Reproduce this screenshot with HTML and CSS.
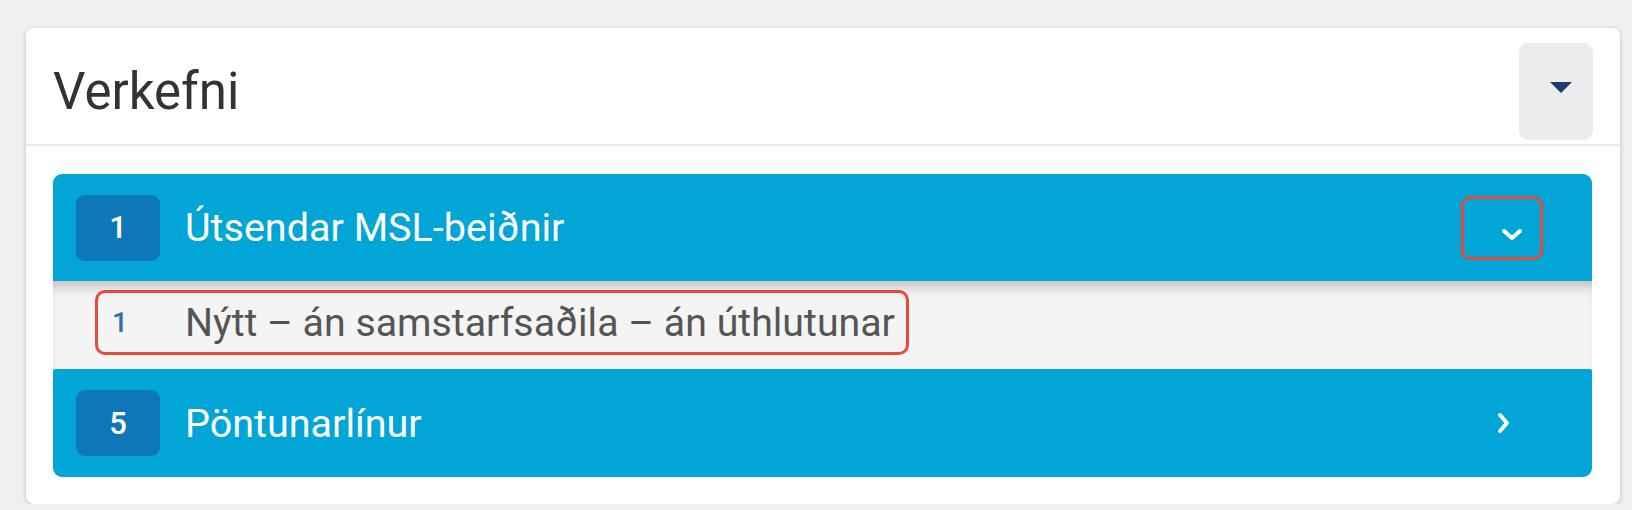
FILE: index.html
```html
<!DOCTYPE html>
<html lang="is">
<head>
<meta charset="utf-8">
<title>Verkefni</title>
<link rel="stylesheet" href="styles.css">
</head>
<body>
  <section class="card">
    <header class="card-header">
      <h2 class="card-title">Verkefni</h2>
      <button class="menu-btn" type="button" aria-label="Valmynd"><span class="caret"></span></button>
    </header>
    <div class="card-body">
      <div class="group">
        <div class="bar bar-first">
          <span class="badge">1</span>
          <span class="bar-label">Útsendar MSL-beiðnir</span>
          <span class="toggle toggle-open">
            <svg width="22" height="13" viewBox="0 0 22 13"><path d="M3 3 L11 10 L19 3" fill="none" stroke="#fff" stroke-width="4" stroke-linecap="round" stroke-linejoin="round"/></svg>
          </span>
        </div>
        <div class="sub-row">
          <div class="sub-item">
            <span class="sub-num">1</span>
            <span class="sub-label">Nýtt – án samstarfsaðila – án úthlutunar</span>
          </div>
        </div>
        <div class="bar bar-last">
          <span class="badge">5</span>
          <span class="bar-label">Pöntunarlínur</span>
          <span class="toggle toggle-closed">
            <svg width="14" height="22" viewBox="0 0 14 22"><path d="M3 3 L10 11 L3 19" fill="none" stroke="#fff" stroke-width="4" stroke-linecap="round" stroke-linejoin="round"/></svg>
          </span>
        </div>
      </div>
    </div>
  </section>
</body>
</html>
```
FILE: styles.css
```css
* { box-sizing: border-box; }

body {
  margin: 0;
  padding: 28px 12px 0 26px;
  background: #f0f0f0;
  font-family: Roboto, "Liberation Sans", Arial, sans-serif;
}

.card {
  width: 1594px;
  height: 476px;
  background: #fff;
  border-radius: 8px;
  box-shadow: 0 1px 4px rgba(0, 0, 0, 0.22);
}

.card-header {
  display: flex;
  align-items: center;
  justify-content: space-between;
  padding: 15px 27px 4px 27px;
  border-bottom: 2px solid #e9e9e9;
}

.card-title {
  margin: 0;
  font-size: 51px;
  font-weight: 400;
  color: #333;
  line-height: 1;
}

.menu-btn {
  width: 74px;
  height: 97px;
  border: 0;
  border-radius: 9px;
  background: #ececec;
  display: flex;
  align-items: center;
  justify-content: center;
  padding: 0 0 8px 10px;
}

.caret {
  width: 0;
  height: 0;
  border-left: 11px solid transparent;
  border-right: 11px solid transparent;
  border-top: 11px solid #1d3a72;
}

.card-body {
  padding: 28px 28px 26px 27px;
}

.bar {
  height: 107px;
  background: #01a6d7;
  display: flex;
  align-items: center;
  padding-left: 23px;
  color: #fff;
}

.bar-first { border-radius: 9px 9px 0 0; }
.bar-last { border-radius: 2px 2px 9px 9px; height: 108px; }

.badge {
  width: 84px;
  height: 66px;
  border-radius: 9px;
  background: #0e77b8;
  display: flex;
  align-items: center;
  justify-content: center;
  font-size: 31px;
  font-weight: 500;
  color: #fff;
}

.bar-label {
  margin-left: 25px;
  font-size: 39.5px;
  flex: 1;
}

.toggle {
  display: flex;
}

.toggle-open {
  width: 82px;
  height: 64px;
  margin-right: 49px;
  border: 3px solid #e34c3c;
  border-radius: 9px;
  align-items: flex-end;
  justify-content: flex-end;
  padding: 0 17px 16px 0;
}

.toggle-closed {
  margin-right: 81px;
}

.sub-row {
  height: 88px;
  background: #f4f4f4;
  box-shadow: inset 0 12px 14px -8px rgba(0, 0, 0, 0.25);
  padding: 9px 0 0 42px;
}

.sub-item {
  display: inline-flex;
  align-items: center;
  height: 65px;
  border: 3px solid #e34c3c;
  border-radius: 10px;
  padding: 0 11px 0 14px;
}

.sub-num {
  width: 73px;
  font-size: 28px;
  font-weight: 500;
  color: #2e6fb2;
}

.sub-label {
  font-size: 39.3px;
  color: #555;
}
```
